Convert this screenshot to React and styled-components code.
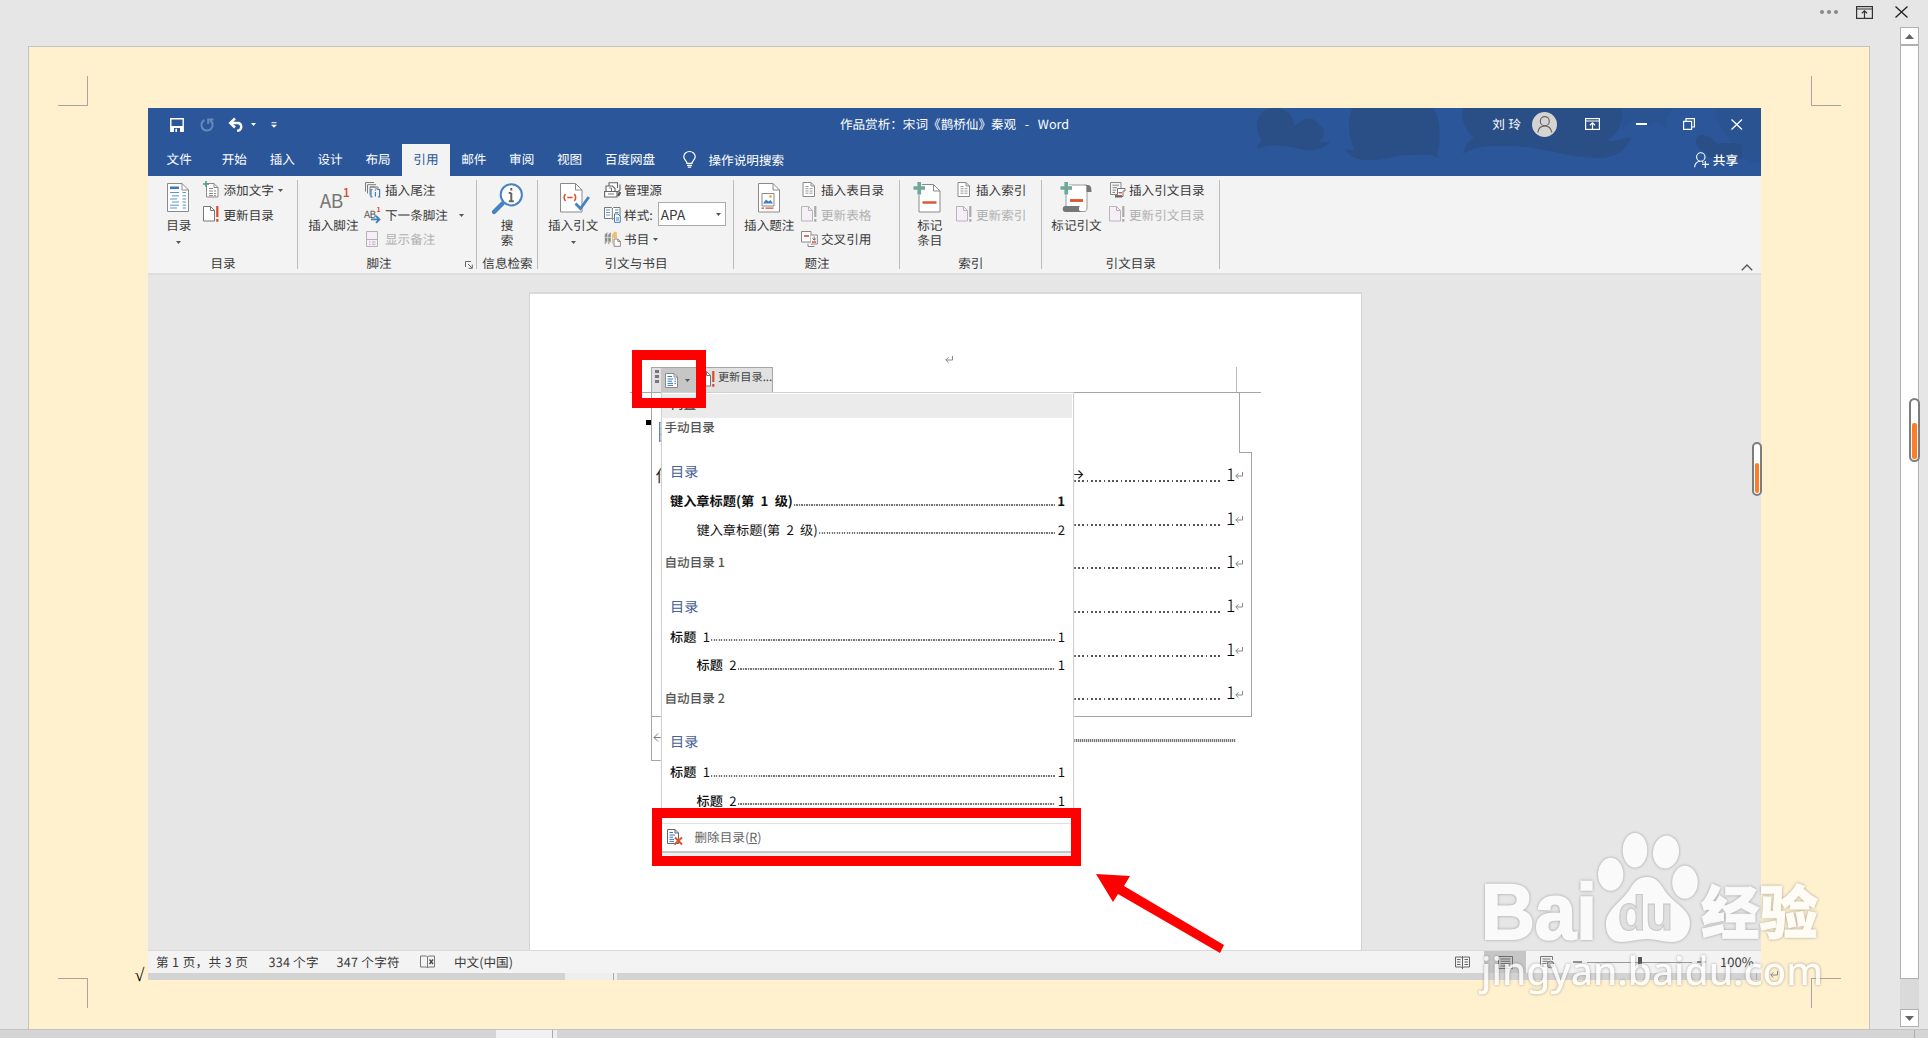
import React from 'react';
import styled, { createGlobalStyle } from 'styled-components';

const GlobalStyle = createGlobalStyle`
    * { box-sizing: border-box; }
    body {
        margin: 0;
        background: #e6e6e6;
        overflow: hidden;
        font-family: "Noto Sans CJK SC", sans-serif;
        font-size: 12.6px;
        color: #3a3a3a;
        text-rendering: geometricPrecision;
    }
    svg { display: block; flex-shrink: 0; overflow: visible; }
`;

/* ---------- icons ---------- */

const Svg = ({ w, h, children, ...rest }) => (
    <svg width={w} height={h} viewBox={`0 0 ${w} ${h}`} fill="none" {...rest}>{children}</svg>
);

const RibbonToggle = ({ w = 15, h = 12, color = '#fff' }) => (
    <Svg w={w} h={h} stroke={color} strokeWidth="1.2">
        <rect x=".6" y=".6" width={w - 1.2} height={h - 1.2} />
        <path d={`M0 3H${w}M${w / 2} ${h - 1}V5M${w / 2 - 2.6} 7.2L${w / 2} 4.8L${w / 2 + 2.6} 7.2`} />
    </Svg>
);

const Cross = ({ w = 11.5, h = 11, color = '#fff' }) => (
    <Svg w={w} h={h} stroke={color} strokeWidth="1.3"><path d={`M.5 .5L${w - .5} ${h - .5}M${w - .5} .5L.5 ${h - .5}`} /></Svg>
);

const Caret = ({ color = '#555' }) => <Svg w={5} h={3}><path d="M0 0H5L2.5 3Z" fill={color} /></Svg>;

const SaveIcon = () => (
    <Svg w={14} h={14}>
        <path d="M.8 .8H13.2V13.2H.8Z" stroke="#fff" strokeWidth="1.4" />
        <path d="M1 8H13V13H1Z" fill="#fff" />
        <path d="M4 10H10V14H4Z" fill="#2b579a" /><path d="M5.4 10.8H7V14H5.4Z" fill="#fff" />
    </Svg>
);
const RedoIcon = () => (
    <Svg w={14} h={14} stroke="#6788bb" strokeWidth="2"><path d="M4.5 2A5.6 5.6 0 1 0 10.2 2.4M8.2 6V1.5H13.5" /></Svg>
);
const UndoIcon = () => (
    <Svg w={16} h={14}>
        <path d="M3 5H9.5A4 4 0 0 1 9.5 12.6H8" stroke="#fff" strokeWidth="2.4" />
        <path d="M6 .5L1.2 5L6 9.5" stroke="#fff" strokeWidth="2.4" />
    </Svg>
);
const CustomizeIcon = () => <Svg w={6} h={6}><path d="M.5 .7H5.5" stroke="#fff" /><path d="M0 2.8H6L3 5.8Z" fill="#fff" /></Svg>;
const RestoreIcon = () => (
    <Svg w={12} h={12} stroke="#fff" strokeWidth="1.2"><path d="M.6 3.4H8.6V11.4H.6ZM3 3.2V.6H11.4V9H9" /></Svg>
);
const PersonIcon = () => (
    <Svg w={25} h={25}>
        <circle cx="12.5" cy="12.5" r="12.5" fill="#d6d4d3" />
        <circle cx="12.8" cy="9.2" r="4.5" stroke="#666" strokeWidth="1.2" />
        <path d="M5.8 20.5C6.5 16 9 13.8 12.8 13.8S19 16 19.8 20.5" stroke="#666" strokeWidth="1.2" />
    </Svg>
);
const ShareIcon = () => (
    <Svg w={16} h={16} stroke="#fff" strokeWidth="1.1">
        <circle cx="6.8" cy="5" r="4.2" /><path d="M.6 15.2C.8 11.5 2.6 9.6 6 9.2M8 9.6L9.4 10.4M11.3 9V16M8 12.4H15" />
    </Svg>
);
const BulbIcon = () => (
    <Svg w={13} h={17} stroke="#fff" strokeWidth="1.2">
        <path d="M4 12.4C4 9.6 .8 9 .8 5.8A5.6 5.2 0 0 1 12.2 5.8C12.2 9 9 9.6 9 12.4ZM4 14.3H9M4.8 16.2H8.2" />
    </Svg>
);

const page = (w, h, f, fill = '#fff', stroke = '#8a8a8a') => (
    <>
        <path d={`M.5 .5H${w - f}L${w - .5} ${f}V${h - .5}H.5Z`} fill={fill} stroke={stroke} />
        <path d={`M${w - f} .5V${f}H${w - .5}`} stroke={stroke} />
    </>
);

const TocIcon = () => (
    <Svg w={22} h={29}>
        {page(22, 29, 7)}
        <path d="M3 4.8H12" stroke="#3b78b8" strokeWidth="2.6" />
        <path d="M3 9.5H12M5 12.8H12M3 16H10M5 19H12M3 22.2H12M3 25H10" stroke="#5c93cb" />
        <path d="M15.5 9.5H19M15.5 12.8H19M15.5 16H19M15.5 19H19M15.5 22.2H19M15.5 25H19" stroke="#5c93cb" />
    </Svg>
);
const AddTextIcon = () => (
    <Svg w={16} h={17}>
        <g transform="translate(3 2)">{page(12.5, 14.5, 4.5)}<path d="M3 5.5H7M3 8H10M3 10.5H10M3 12.6H10" stroke="#8a8a8a" strokeDasharray="4 1" /></g>
        <path d="M0 3H6M3 0V6" stroke="#4fa182" strokeWidth="1.6" />
    </Svg>
);
const UpdateIcon = ({ off }) => (
    <Svg w={16} h={16}>
        {page(12, 15.5, 4.5, off ? '#f6eff8' : '#fff', off ? '#b9b3bb' : '#777')}
        <path d="M14.3 0V11M14.3 13V15.8" stroke={off ? '#aaa' : '#dc4c2c'} strokeWidth="2.2" />
    </Svg>
);
const EndnoteIcon = () => (
    <Svg w={17} h={16}>
        <path d="M1.5 9.5V.5H10M3.5 11.5V2.7H12M6 13.5V5H10.5L14 8V5H6" stroke="#7d7d7d" />
        <path d="M8.5 7.5H7V14.8H8.5M14 7.5H15.6V14.8H14M11.4 10V14.5M11.4 7.6V8.8" stroke="#3f7fbf" strokeWidth="1.2" />
    </Svg>
);
const NextNoteIcon = () => (
    <Svg w={17} h={17}>
        <text x="0" y="11.5" fontSize="10" fill="#555" textLength="12" fontFamily="Noto Sans CJK SC">AB</text>
        <text x="12.5" y="6" fontSize="7" fill="#dc4c2c" fontWeight="700">1</text>
        <path d="M7 13.4H15M12 10L15.5 13.4L12 16.8" stroke="#3f7fbf" strokeWidth="1.8" />
    </Svg>
);
const ShowNotesIcon = () => (
    <Svg w={17} h={16}>
        <path d="M2.5 .5H13.5V15.5H2.5Z" fill="#f6eff8" stroke="#b5b0b8" /><path d="M2.5 8.5H13.5M5 11H6.5M8 11H11.5M5 13.3H6.5M8 13.3H11.5" stroke="#b5b0b8" />
    </Svg>
);
const SearchInfoIcon = () => (
    <Svg w={31} h={31}>
        <path d="M10.5 20.5L2 29" stroke="#4583c2" strokeWidth="4.4" strokeLinecap="round" />
        <circle cx="19.3" cy="11.8" r="10.6" fill="#fff" stroke="#4583c2" strokeWidth="2" />
        <path d="M19.3 10V18.5M16.8 10H19.3M16.8 18.3H21.8M19.3 5V7.6" stroke="#666" strokeWidth="2" />
    </Svg>
);
const CitationIcon = () => (
    <Svg w={30} h={30}>
        {page(22.5, 29.5, 7)}
        <path d="M5.5 11C3.5 13.5 3.5 15.5 5.5 18M14.3 11C16.3 13.5 16.3 15.5 14.3 18M7.3 14.5H12.6" stroke="#dc4c2c" strokeWidth="1.5" />
        <path d="M15.5 20.5L20.5 25.5L28.8 14" stroke="#4583c2" strokeWidth="2.8" />
    </Svg>
);
const SourcesIcon = () => (
    <Svg w={17} h={16}>
        <path d="M.6 9.5H13V15H.6ZM2 9V4H8.5L11 6.5V9M5 3.5V.8H13.5V6M13.5 10L16 8V2.5" stroke="#666" fill="#fff" strokeWidth="1.1" />
        <path d="M14 14L16.2 10" stroke="#555" strokeWidth="2.4" /><path d="M4 12H10M5 6H7.5V9" stroke="#777" />
    </Svg>
);
const StyleIcon = () => (
    <Svg w={17} h={17}>
        <path d="M.5 1.5H7.5L8.5 2.5L9.5 1.5H16V12.5H9.5L8.5 13.5L7.5 12.5H.5ZM8.3 2V13" stroke="#777" fill="#fff" />
        <path d="M2 4H6M2 6.5H6M2 9H6M11 4H14.5M11 6.5H14.5" stroke="#5c93cb" />
        <path d="M10.5 8H14L16.3 10.3V16.3H10.5Z" fill="#fff" stroke="#3f7fbf" /><path d="M12 12H15M12 14H15" stroke="#3f7fbf" />
    </Svg>
);
const BibliographyIcon = () => (
    <Svg w={17} h={16}>
        <path d="M.8 3.8L3.4 1.2V10.8L.8 13.4ZM4.2 3.8L6.8 1.2V10.8L4.2 13.4Z" fill="#8c8c8c" />
        <path d="M.8 3.2L3 .8M4.2 3.2L6.4 .8M.8 6.4H7M.8 11H7" stroke="#d9d9d9" strokeWidth=".8" />
        <path d="M8 3.2L10.6 .4L13 1.4V7H9V13L8 12.4Z" fill="#ecc078" />
        <g transform="translate(9.5 7.5)">{page(7.3, 8.3, 3)}</g>
    </Svg>
);
const CaptionIcon = () => (
    <Svg w={22} h={30}>
        {page(22, 29.5, 7)}
        <path d="M4 10.5H16V23H4Z" fill="#fff" stroke="#888" /><path d="M5 20.5L8 16.5L10.5 18.5L12.5 17L15 20.5Z" fill="#3f7fbf" />
        <circle cx="12.5" cy="13.5" r="1.3" fill="#e9a23b" /><path d="M3.5 25.2H6M7.5 25.2H15.5" stroke="#dc4c2c" strokeWidth="1.2" />
    </Svg>
);
const ListIcon = () => (
    <Svg w={16} h={15}>
        <g transform="translate(1.5 0)">{page(12.5, 15, 4)}<path d="M3 4.5H7M3 6.7H10M3 9H10M3 11.2H10" stroke="#999" strokeDasharray="3 1" /></g>
    </Svg>
);
const CrossRefIcon = () => (
    <Svg w={17} h={16}>
        <path d="M.5 .5H10V11H.5Z" fill="#fff" stroke="#888" /><path d="M3 5H8" stroke="#dc4c2c" strokeWidth="1.6" />
        <path d="M10 4H16.3V13H10M7 12.5V15.5H13.5" stroke="#888" fill="#fff" /><path d="M11 11H15" stroke="#dc4c2c" strokeWidth="1.5" />
        <path d="M13.2 5.5V9M11.5 7.5L13.2 9.2L15 7.5" stroke="#666" />
    </Svg>
);
const MarkEntryIcon = () => (
    <Svg w={28} h={31}>
        <g transform="translate(5.5 2)">{page(22, 28.5, 7)}<path d="M4 18.5H18" stroke="#d9552f" strokeWidth="2.4" /></g>
        <path d="M.5 6H12M6.2 0V12.5" stroke="#f3f3f3" strokeWidth="5.4" /><path d="M.5 6H12M6.2 0V12.5" stroke="#6fa898" strokeWidth="3.6" />
    </Svg>
);
const MarkCitationIcon = () => (
    <Svg w={32} h={31}>
        <path d="M6 3H27V26C27 28 26 29.5 24 29.5H6Z" fill="#fff" stroke="#999" />
        <path d="M25 3H28C31 3 31.5 6 31.5 10H26.5V4Z" fill="#777" />
        <path d="M4.5 24H20C18 26 19 30 22 30H5.5C2 30 2 25 4.5 24Z" fill="#777" />
        <path d="M10 18.5H23" stroke="#d9552f" strokeWidth="2.8" />
        <path d="M.5 6H12M6.2 0V12.5" stroke="#f3f3f3" strokeWidth="5.4" /><path d="M.5 6H12M6.2 0V12.5" stroke="#6fa898" strokeWidth="3.6" />
    </Svg>
);
const CitationTableIcon = () => (
    <Svg w={17} h={16}>
        <path d="M1.5 .5H12V6M1.5 .5V12.5H6M3.5 3.2H10M3.5 5.7H8M3.5 8.2H7M3.5 10.5H6" stroke="#8a8a8a" />
        <path d="M8.5 6.5H16V9H14V14.5H6.5V12.5H8.5Z" fill="#fff" stroke="#777" /><path d="M6 14.3H13" stroke="#666" strokeWidth="2.4" />
        <path d="M9.5 10.7H13" stroke="#dc4c2c" strokeWidth="1.3" />
    </Svg>
);
const SmallTocIcon = () => (
    <Svg w={13} h={15}>{page(13, 15, 4)}<path d="M2.5 3.5H7M2.5 6H8M2.5 8.2H7M2.5 10.4H8M2.5 12.4H8M9.5 6H11M9.5 8.2H11M9.5 10.4H11" stroke="#3b78b8" /></Svg>
);
const RemoveTocIcon = () => (
    <Svg w={16} h={16}>
        {page(12, 15, 4, '#fff', '#666')}<path d="M2.5 3.5H6M2.5 6H8M2.5 8.2H6M2.5 10.4H7M2.5 12.4H7" stroke="#3b78b8" />
        <path d="M8 8.5L15 15.5M15 8.5L7.5 15.5" stroke="#d9552f" strokeWidth="2" />
    </Svg>
);
const LauncherIcon = () => <Svg w={8} h={8} stroke="#666"><path d="M.5 6V.5H6M3 3L7 7M7.3 3.6V7.3H3.6" /></Svg>;
const ProofIcon = () => (
    <Svg w={15} h={13} stroke="#777"><path d="M.5 1H6.5L7.5 2L8.5 1H14.5V12H8.5L7.5 13L6.5 12H.5ZM7.5 2V13" /><path d="M9.5 4.5L13 9M13 4.5L9.5 9" stroke="#444" strokeWidth="1.3" /></Svg>
);
const ReadIcon = () => (
    <Svg w={15} h={13} stroke="#666"><path d="M.5 1H6.5L7.5 2L8.5 1H14.5V11H8.5L7.5 12L6.5 11H.5ZM7.5 0V13M2 3.5H5.5M2 6H5.5M2 8.5H5.5M9.5 3.5H13M9.5 6H13M9.5 8.5H13" /></Svg>
);
const PrintIcon = () => (
    <Svg w={15} h={13} stroke="#6b6b6b"><path d="M.5 .5H14.5V12.5H.5ZM2.5 3H12.5M2.5 5.3H12.5M2.5 7.6H12.5M2.5 10H12.5" /></Svg>
);
const WebIcon = () => (
    <Svg w={15} h={13} stroke="#777"><path d="M.5 11V.5H12.5V4M.5 10.5H6M2.5 3H10.5M2.5 5.3H8M2.5 7.6H6.5" /><circle cx="10.5" cy="8.5" r="3.4" fill="#bbb" /></Svg>
);
const ReturnMark = ({ color = '#888' }) => <Svg w={8} h={7} stroke={color}><path d="M7.5 0V4H.8M3.5 1.3L.8 4L3.5 6.7" /></Svg>;

/* ---------- outer editor ---------- */

const Root = styled.div`
    width: 1928px;
    height: 1038px;
    display: flex;
    flex-direction: column;
    overflow: hidden;
`;
const TopBar = styled.div`
    height: 27px;
    padding: 6px 20px 0 0;
    display: flex;
    justify-content: flex-end;
`;
const More = styled.div`
    display: flex;
    gap: 3px;
    margin: 4px 18px 0 0;
    i { width: 4px; height: 4px; border-radius: 50%; background: #888; }
`;
const TopGap = styled.div`width: 22px;`;
const Workspace = styled.div`
    height: 1002px;
    display: flex;
`;
const Sheet = styled.div`
    position: relative;
    width: 1842px;
    margin: 19px 30px 0 28px;
    padding: 61px 0 0 119px;
    border: 1px solid #c3c3c3;
    border-bottom: 0;
    background: #fff0ce;
`;
const CropMark = styled.div`
    position: absolute;
    width: 30px;
    height: 30px;
    border: 0 solid #aaa5a0;
    ${p => p.$v}: ${p => (p.$v === 'top' ? 29 : 21)}px;
    ${p => p.$h}: ${p => (p.$h === 'left' ? 29 : 28)}px;
    border-${p => p.$v === 'top' ? 'bottom' : 'top'}-width: 1px;
    border-${p => p.$h === 'left' ? 'right' : 'left'}-width: 1px;
`;
const RootSign = styled.span`
    position: absolute;
    left: 105.5px;
    top: 918px;
    font: 18px/20px "Liberation Serif", serif;
    color: #000;
`;
const EndMark = styled.span`
    position: absolute;
    left: 1741px;
    top: 924px;
`;
const ScrollTrack = styled.div`
    width: 19px;
    height: 1000px;
    display: flex;
    flex-direction: column;
    background: #dadada;
`;
const ScrollButton = styled.div`
    height: 18px;
    display: grid;
    place-items: center;
    background: #fff;
    border: 1px solid #b0b0b0;
`;
const ScrollThumb = styled.div`
    height: 934px;
    background: #fff;
    border: 1px solid #b0b0b0;
    margin-bottom: 30px;
`;
const BottomBar = styled.div`
    height: 9px;
    display: flex;
    background: #d5d5d5;
    border-top: 1px solid #c3c3c3;
`;
const Segment = styled.div`
    width: ${p => p.$w}px;
    background: ${p => p.$bg || 'transparent'};
    border-right: ${p => (p.$line ? '1px solid #aaa' : 0)};
`;
const Capsule = styled.div`
    position: absolute;
    left: ${p => p.$x}px;
    top: ${p => p.$y}px;
    width: ${p => p.$w}px;
    height: ${p => p.$h}px;
    border: 2px solid #7d7d7d;
    border-radius: 6px;
    background: #fff;
    padding: ${p => p.$h * 0.36}px 1px 1px;
    &::after {
        content: '';
        display: block;
        height: 100%;
        border-radius: 2px;
        background: #ff7d27;
    }
`;

/* ---------- inner Word window ---------- */

const Window = styled.div`
    position: relative;
    width: 1613px;
    height: 872px;
    display: flex;
    flex-direction: column;
    background: #f3f3f3;
`;
const Header = styled.div`
    position: relative;
    height: 68px;
    background: #2b579a;
    color: #fff;
`;
const Clouds = styled.div`
    position: absolute;
    right: 0;
    top: 0;
`;
const TitleBar = styled.div`
    position: relative;
    height: 36px;
    display: grid;
    grid-template-columns: 1fr auto 1fr;
    align-items: center;
`;
const QuickAccess = styled.div`
    display: flex;
    align-items: center;
    padding: 0 0 3px 22px;
`;
const QuickItem = styled.div`margin-right: ${p => p.$gap}px;`;
const Title = styled.div`
    padding-bottom: 5px;
    word-spacing: 1.5px;
    white-space: pre;
`;
const WindowButtons = styled.div`
    display: flex;
    justify-content: flex-end;
    align-items: center;
    gap: 36px;
    padding: 0 18.5px 4px 0;
`;
const User = styled.div`
    display: flex;
    align-items: center;
    gap: 10.5px;
    margin-right: -7.5px;
    line-height: 22px;
    span { padding-bottom: 1px; word-spacing: .8px; }
`;
const Minus = styled.div`
    width: 11px;
    height: 1.5px;
    background: #fff;
`;
const Tabs = styled.div`
    position: relative;
    height: 32px;
    display: flex;
    line-height: 30px;
    text-align: center;
`;
const Tab = styled.div`
    width: ${p => p.$w || 47.9}px;
    ${p => p.$active && 'background: #f3f3f3; color: #2b579a;'}
`;
const Tell = styled.div`
    display: flex;
    align-items: center;
    gap: 12.5px;
    margin-left: 16.5px;
    padding-bottom: 1px;
`;
const Share = styled.div`
    display: flex;
    align-items: center;
    gap: 3px;
    margin: 0 23px 0 auto;
    font-weight: 500;
`;
const Ribbon = styled.div`
    height: 99px;
    display: flex;
    border-bottom: 2px solid #dedede;
`;
const Group = styled.div`
    position: relative;
    width: ${p => p.$w}px;
    height: 97px;
    &::after {
        content: '';
        position: absolute;
        right: 0;
        top: 4px;
        height: 89px;
        border-right: 1px solid #bdbdbd;
    }
`;
const GroupBody = styled.div`
    display: flex;
    height: 78px;
    padding-left: ${p => p.$pad || 0}px;
`;
const GroupLabel = styled.div`
    line-height: 18px;
    padding-right: ${p => (p.$shift ? 17 : 0)}px;
    text-align: center;
`;
const Launcher = styled.div`
    position: absolute;
    right: 4px;
    bottom: 4px;
`;
const BigButton = styled.div`
    width: ${p => p.$w}px;
    display: flex;
    flex-direction: column;
    align-items: center;
    text-align: center;
    line-height: 15.8px;
    white-space: nowrap;
    svg { margin-top: 9px; }
`;
const BigIcon = styled.div`
    height: 40.5px;
    flex-shrink: 0;
    margin-left: ${p => p.$dx || 0}px;
    padding-top: ${p => p.$top || 7}px;
    && svg { margin: 0; }
`;
const SmallColumn = styled.div`padding-top: 1.7px;`;
const SmallButton = styled.div`
    height: 24.4px;
    display: flex;
    align-items: center;
    white-space: nowrap;
    color: ${p => (p.$off ? '#b1b1b1' : '#3a3a3a')};
    & > svg { margin: 2px 0 0 ${p => p.$caretGap}px; }
`;
const SmallIcon = styled.div`width: 20.5px;`;
const Combo = styled.div`
    width: 68px;
    height: 24px;
    margin-left: 5px;
    padding: 0 4px 0 2px;
    display: flex;
    align-items: center;
    justify-content: space-between;
    font-size: 13.6px;
    background: #fff;
    border: 1px solid #ababab;
`;
const NoteGlyph = styled.div`
    position: relative;
    left: -2px;
    font-size: 19px;
    line-height: 28px;
    letter-spacing: -.4px;
    color: #777;
    padding-top: 4px;
    sup {
        position: absolute;
        left: 23px;
        top: 1px;
        font-size: 12.5px;
        line-height: 15px;
        font-weight: 500;
        color: #dc4c2c;
    }
`;
const Collapse = styled.div`
    margin: 88px 8px 0 auto;
`;

/* ---------- document ---------- */

const Canvas = styled.div`
    height: 675px;
    padding: 17px 0 0 381px;
    background: #e6e6e6;
    overflow: hidden;
`;
const Paper = styled.div`
    position: relative;
    width: 833px;
    height: 670px;
    background: #fff;
    border: 1px solid #d3d3d3;
    border-top: 2px solid #dadada;
`;
const PaperHead = styled.div`
    width: 631px;
    height: 99px;
    margin-left: 100px;
    padding: 62px 0 0 315px;
    border-bottom: 1px solid #a5a5a5;
`;
const MarginTick = styled.div`
    position: absolute;
    left: 706px;
    top: 73px;
    height: 25px;
    border-left: 1px solid #bbb;
`;
const TocTop = styled.div`
    width: 589px;
    height: 59px;
    margin-left: 121px;
    border: solid #a5a5a5;
    border-width: 0 1px;
`;
const TocBody = styled.div`
    width: 601px;
    height: 265px;
    margin-left: 121px;
    border: 1px solid #a5a5a5;
    border-top: 0;
`;
const TocRow = styled.div`
    height: 43.7px;
    padding-left: 422px;
    display: flex;
    align-items: center;
    & > svg { margin-top: 2px; }
`;
const TocStep = styled.div`
    width: 12px;
    height: 1px;
    margin-left: auto;
    background: #a5a5a5;
`;
const Dots = styled.div`
    width: 147px;
    height: 2px;
    margin: 12px 5px 0 0;
    background: repeating-linear-gradient(90deg, #555 0 1.7px, transparent 1.7px 4.25px);
`;
const TocNumber = styled.span`
    width: 8px;
    font-size: 17.5px;
    font-weight: 300;
    line-height: 24px;
    margin-right: 1px;
    color: #000;
`;
const TocTail = styled.div`
    width: 10px;
    height: 44px;
    margin-left: 121px;
    border: solid #a5a5a5;
    border-width: 0 0 1px 1px;
    padding: 16px 0 0 1px;
`;
const SectionBreak = styled.div`
    position: absolute;
    left: 544px;
    top: 445px;
    width: 162px;
    height: 3px;
    background: repeating-linear-gradient(90deg, #777 0 1px, #d8d8d8 1px 2px);
`;
const Bullet = styled.div`
    position: absolute;
    left: 116px;
    top: 126px;
    width: 5px;
    height: 5px;
    background: #000;
`;
const HiddenTitle = styled.div`
    position: absolute;
    left: 129px;
    top: 128px;
    width: 3px;
    height: 20px;
    background: repeating-linear-gradient(180deg, #5a7bb8 0 1px, #a9bbdc 1px 6px);
    border-left: 1px solid #5a7bb8;
`;
const HiddenEntry = styled.div`
    position: absolute;
    left: 125.5px;
    top: 171px;
    font-size: 17px;
    line-height: 20px;
    color: #222;
`;
const TabMark = styled.div`
    position: absolute;
    left: 543px;
    top: 176px;
`;
const TocToolbar = styled.div`
    position: absolute;
    left: 121px;
    top: 73px;
    width: 122px;
    height: 26px;
    display: flex;
    background: #e1e1e1;
    border: 1px solid #a6a6a6;
    font-size: 11.2px;
    line-height: 18px;
    color: #444;
`;
const Grip = styled.div`
    width: 9px;
    padding: 2px 0 0 3px;
    i { display: block; width: 4px; height: 3px; background: #777; margin-bottom: 2px; }
`;
const TocMenuButton = styled.div`
    width: 37px;
    height: 24px;
    display: flex;
    align-items: center;
    gap: 7px;
    padding-left: 4px;
    background: #c6c6c6;
`;
const UpdateButton = styled.div`
    display: flex;
    align-items: flex-start;
    gap: 2.5px;
    padding-left: 2.5px;
    white-space: nowrap;
    svg { margin-top: 3px; }
`;
const Menu = styled.div`
    position: absolute;
    left: 131px;
    top: 98px;
    width: 413px;
    height: 461px;
    display: flex;
    flex-direction: column;
    background: #fff;
    border: 1px solid #d0d0d0;
    border-bottom: 2px solid #c6c6c6;
    box-shadow: 0 3px 2px #eee;
`;
const MenuHead = styled.div`
    height: 24px;
    margin: 1px 1px -1px 0;
    padding: 1px 0 0 9px;
    line-height: 18px;
    font-weight: 500;
    background: #ebebeb;
`;
const Section = styled.div`
    height: 135.3px;
    padding: 0 8px 0 8px;
`;
const SectionLabel = styled.div`
    margin-left: -5.5px;
    line-height: 19px;
    font-weight: 500;
    color: #555;
`;
const SectionTitle = styled.div`
    margin: 25.5px 0 5.2px;
    font-size: 14.2px;
    line-height: 20px;
    color: #4a6193;
`;
const Entry = styled.div`
    height: 28.5px;
    display: flex;
    align-items: center;
    padding-left: ${p => (p.$sub ? 26.5 : 0)}px;
    font-size: 13.2px;
    font-weight: ${p => p.$weight};
    word-spacing: 3.4px;
    white-space: pre;
    color: #111;
    i {
        flex: 1;
        height: 2px;
        margin: 8px 2.5px 0 1px;
        background: repeating-linear-gradient(90deg, #777 0 1.2px, #e6e6e6 1.2px 2.5px);
    }
    b { font-weight: ${p => (p.$weight === 700 ? 700 : 400)}; }
`;
const MenuFoot = styled.div`
    height: 28px;
    margin-top: auto;
    border-top: 1px solid #e1e1e1;
    display: flex;
    align-items: center;
    gap: 12px;
    padding: 0 0 2px 4.5px;
    color: #666;
`;

/* ---------- status bar ---------- */

const StatusBar = styled.div`
    height: 23px;
    display: flex;
    align-items: center;
    border-top: 1px solid #dadada;
    padding-left: 8px;
    line-height: 20px;
    white-space: pre;
`;
const StatusItem = styled.div`
    width: ${p => p.$w}px;
    padding-bottom: 1px;
    letter-spacing: ${p => p.$ls || 0}px;
`;
const ViewTools = styled.div`
    margin-left: auto;
    display: flex;
    align-items: center;
    height: 22px;
`;
const ActiveView = styled.div`
    width: 42px;
    height: 22px;
    margin: 0 14px;
    display: grid;
    place-items: center;
    background: #c6c6c6;
`;
const Slider = styled.div`
    display: flex;
    align-items: center;
    margin: 0 14px 0 18px;
`;
const Percent = styled.div`
    width: 41px;
    padding-bottom: 1px;
    font-size: 13px;
`;
const BottomStrip = styled.div`
    height: 7px;
    display: flex;
    background: #d3d3d3;
`;

/* ---------- callouts ---------- */

const RedBox = styled.div`
    position: absolute;
    left: ${p => p.$x}px;
    top: ${p => p.$y}px;
    width: ${p => p.$w}px;
    height: 58px;
    border: 10px solid #fe0000;
`;
const Arrow = styled.div`
    position: absolute;
    left: 948px;
    top: 766px;
`;
const Watermark = styled.div`
    position: absolute;
    left: 1470px;
    top: 825px;
    filter: drop-shadow(0 0 1.5px rgba(110, 110, 110, .75));
    opacity: .8;
`;

const tabs = ['开始', '插入', '设计', '布局', '引用', '邮件', '审阅', '视图'];

const sections = [
    { label: '手动目录', weights: [700, 400], one: ['键入章标题(第 1 级)', '', 1], two: ['键入章标题(第 2 级)', '', 2] },
    { label: '自动目录 1', weights: [500, 500], one: ['标题', ' 1', 1], two: ['标题', ' 2', 1] },
    { label: '自动目录 2', weights: [500, 500], one: ['标题', ' 1', 1], two: ['标题', ' 2', 1] },
];

const Small = ({ icon, children, off, caret, gap }) => (
    <SmallButton $off={off} $caretGap={gap}>
        <SmallIcon>{icon}</SmallIcon>
        {children}
        {caret && <Caret />}
    </SmallButton>
);

const References = () => (
    <Ribbon>
        <Group $w={150}>
            <GroupBody $pad={6.5}>
                <BigButton $w={48.5}><BigIcon $dx={-1}><TocIcon /></BigIcon>目录<Caret /></BigButton>
                <SmallColumn>
                    <Small icon={<AddTextIcon />} caret gap={4}>添加文字</Small>
                    <Small icon={<UpdateIcon />}>更新目录</Small>
                </SmallColumn>
            </GroupBody>
            <GroupLabel>目录</GroupLabel>
        </Group>
        <Group $w={179}>
            <GroupBody $pad={4.2}>
                <BigButton $w={62.3}><BigIcon><NoteGlyph>AB<sup>1</sup></NoteGlyph></BigIcon>插入脚注</BigButton>
                <SmallColumn>
                    <Small icon={<EndnoteIcon />}>插入尾注</Small>
                    <Small icon={<NextNoteIcon />} caret gap={11}>下一条脚注</Small>
                    <Small icon={<ShowNotesIcon />} off>显示备注</Small>
                </SmallColumn>
            </GroupBody>
            <GroupLabel $shift>脚注</GroupLabel>
            <Launcher><LauncherIcon /></Launcher>
        </Group>
        <Group $w={61}>
            <GroupBody>
                <BigButton $w={60}><BigIcon><SearchInfoIcon /></BigIcon>搜<br />索</BigButton>
            </GroupBody>
            <GroupLabel>信息检索</GroupLabel>
        </Group>
        <Group $w={196}>
            <GroupBody $pad={4.6}>
                <BigButton $w={61}><BigIcon $dx={3}><CitationIcon /></BigIcon>插入引文<Caret /></BigButton>
                <SmallColumn>
                    <Small icon={<SourcesIcon />}>管理源</Small>
                    <Small icon={<StyleIcon />}>样式:<Combo>APA<Caret /></Combo></Small>
                    <Small icon={<BibliographyIcon />} caret gap={4}>书目</Small>
                </SmallColumn>
            </GroupBody>
            <GroupLabel>引文与书目</GroupLabel>
        </Group>
        <Group $w={166}>
            <GroupBody $pad={4}>
                <BigButton $w={62.5}><BigIcon><CaptionIcon /></BigIcon>插入题注</BigButton>
                <SmallColumn>
                    <Small icon={<ListIcon />}>插入表目录</Small>
                    <Small icon={<UpdateIcon off />} off>更新表格</Small>
                    <Small icon={<CrossRefIcon />}>交叉引用</Small>
                </SmallColumn>
            </GroupBody>
            <GroupLabel>题注</GroupLabel>
        </Group>
        <Group $w={141.5}>
            <GroupBody $pad={4}>
                <BigButton $w={51.5}><BigIcon $dx={-5} $top={6}><MarkEntryIcon /></BigIcon>标记<br />条目</BigButton>
                <SmallColumn>
                    <Small icon={<ListIcon />}>插入索引</Small>
                    <Small icon={<UpdateIcon off />} off>更新索引</Small>
                </SmallColumn>
            </GroupBody>
            <GroupLabel>索引</GroupLabel>
        </Group>
        <Group $w={178.5}>
            <GroupBody $pad={3}>
                <BigButton $w={64}><BigIcon $dx={-2} $top={6}><MarkCitationIcon /></BigIcon>标记引文</BigButton>
                <SmallColumn>
                    <Small icon={<CitationTableIcon />}>插入引文目录</Small>
                    <Small icon={<UpdateIcon off />} off>更新引文目录</Small>
                </SmallColumn>
            </GroupBody>
            <GroupLabel>引文目录</GroupLabel>
        </Group>
        <Collapse><Svg w={12} h={7} stroke="#555" strokeWidth="1.3"><path d="M.8 6.3L6 1L11.2 6.3" /></Svg></Collapse>
    </Ribbon>
);

const WindowHeader = () => (
    <Header>
        <Clouds>
            <Svg w={520} h={68}>
                <g fill="#2a4e86">
                    <path d="M24 2C32 -1 42 0 46 4C54 8 52 18 54 18C62 10 70 8 76 14C86 22 84 28 78 34C82 35 86 33 89 34C84 40 74 43 64 42C46 38 30 34 16 41C17 36 19 34 21 32C14 24 14 8 24 2Z" />
                    <path d="M112 0H192C200 10 200 36 196 46L199 51C192 46 184 46 170 47C158 46 146 52 130 52C116 53 108 48 104 41C110 43 112 42 113 40C107 28 106 8 112 0Z" />
                    <path d="M222 0H381C383 14 378 24 366 33C378 34 384 28 390 30C386 42 374 50 358 50C330 51 300 38 268 38C248 37 232 39 222 46C224 38 228 32 233 30C222 20 220 8 222 0Z" />
                    <path d="M458 27C470 26 474 34 476 36C486 35 498 34 501 38V50C486 54 468 54 464 44C456 42 452 32 458 27Z" />
                </g>
                <path d="M381 0H432C426 8 424 14 426 20C420 14 414 12 408 18C400 10 388 12 382 22Z" fill="#2a4e86" opacity=".4" />
                <path d="M474 0H520V56C510 54 504 52 500 48C492 30 476 26 474 0Z" fill="#2a4e86" opacity=".4" />
            </Svg>
        </Clouds>
        <TitleBar>
            <QuickAccess>
                <QuickItem $gap={16}><SaveIcon /></QuickItem>
                <QuickItem $gap={15}><RedoIcon /></QuickItem>
                <QuickItem $gap={5.5}><UndoIcon /></QuickItem>
                <QuickItem $gap={15.5}><Caret color="#fff" /></QuickItem>
                <QuickItem $gap={0}><CustomizeIcon /></QuickItem>
            </QuickAccess>
            <Title>作品赏析：宋词《鹊桥仙》秦观  -  Word</Title>
            <WindowButtons>
                <User><span>刘 玲</span><PersonIcon /></User>
                <RibbonToggle />
                <Minus />
                <RestoreIcon />
                <Cross />
            </WindowButtons>
        </TitleBar>
        <Tabs>
            <Tab $w={62.4}>文件</Tab>
            {tabs.map(t => <Tab key={t} $active={t === '引用'}>{t}</Tab>)}
            <Tab $w={73}>百度网盘</Tab>
            <Tell><BulbIcon />操作说明搜索</Tell>
            <Share><ShareIcon />共享</Share>
        </Tabs>
    </Header>
);

const TocEntry = ({ data, weight, sub }) => (
    <Entry $weight={weight} $sub={sub}>
        {data[0]}<b>{data[1]}</b><i /><b>{data[2]}</b>
    </Entry>
);

const TocDropdown = () => (
    <Menu>
        <MenuHead>内置</MenuHead>
        {sections.map(s => (
            <Section key={s.label}>
                <SectionLabel>{s.label}</SectionLabel>
                <SectionTitle>目录</SectionTitle>
                <TocEntry data={s.one} weight={s.weights[0]} />
                <TocEntry data={s.two} weight={s.weights[1]} sub />
            </Section>
        ))}
        <MenuFoot><RemoveTocIcon /><span>删除目录(<u>R</u>)</span></MenuFoot>
    </Menu>
);

const Document = () => (
    <Canvas>
        <Paper>
            <PaperHead><ReturnMark /></PaperHead>
            <MarginTick />
            <TocTop />
            <TocBody>
                <TocStep />
                {[1, 2, 3, 4, 5, 6].map(n => (
                    <TocRow key={n}><Dots /><TocNumber>1</TocNumber><ReturnMark color="#888" /></TocRow>
                ))}
            </TocBody>
            <TocTail><Svg w={9} h={9} stroke="#777"><path d="M9 4.5H1M5 .5L1 4.5L5 8.5" /></Svg></TocTail>
            <SectionBreak />
            <Bullet />
            <HiddenTitle />
            <HiddenEntry>作</HiddenEntry>
            <TabMark><Svg w={10} h={9} stroke="#222" strokeWidth="1.2"><path d="M0 4.5H9.5M5.5 .5L9.5 4.5L5.5 8.5" /></Svg></TabMark>
            <TocToolbar>
                <Grip><i /><i /><i /></Grip>
                <TocMenuButton><SmallTocIcon /><Caret /></TocMenuButton>
                <UpdateButton><UpdateIcon />更新目录...</UpdateButton>
            </TocToolbar>
            <TocDropdown />
        </Paper>
    </Canvas>
);

const Status = () => (
    <StatusBar>
        <StatusItem $w={112.5} $ls={0.35}>第 1 页，共 3 页</StatusItem>
        <StatusItem $w={68} $ls={0.2}>334 个字</StatusItem>
        <StatusItem $w={83.5} $ls={0.25}>347 个字符</StatusItem>
        <StatusItem $w={34}><ProofIcon /></StatusItem>
        <StatusItem $w={60}>中文(中国)</StatusItem>
        <ViewTools>
            <ReadIcon />
            <ActiveView><PrintIcon /></ActiveView>
            <WebIcon />
            <Slider>
                <Svg w={133} h={10} stroke="#666">
                    <path d="M0 5H9" strokeWidth="1.4" /><path d="M14 5.5H119" stroke="#999" />
                    <path d="M67 0V10" stroke="#555" strokeWidth="4" /><path d="M124 5H133M128.5 .5V9.5" strokeWidth="1.3" />
                </Svg>
            </Slider>
            <Percent>100%</Percent>
        </ViewTools>
    </StatusBar>
);

const BaiduMark = () => (
    <Watermark>
        <Svg w={360} h={180}>
            <g fill="#fff" fontFamily="Liberation Sans" fontWeight="700">
                <text x="11" y="113.5" fontSize="79" textLength="116" lengthAdjust="spacingAndGlyphs" stroke="#fff" strokeWidth="2">Bai</text>
                <ellipse cx="140.7" cy="49.3" rx="12.7" ry="16.5" />
                <ellipse cx="165" cy="25.3" rx="12.3" ry="17.3" />
                <ellipse cx="196" cy="27" rx="13" ry="16.5" transform="rotate(8 196 27)" />
                <ellipse cx="215" cy="57.3" rx="12.8" ry="16.5" />
                <path d="M177 52C186 52 190 58 195 66C203 78 220 84 220 98C220 110 212 117 202 117C192 117 186 114 177 114C168 114 160 117 151 117C140 117 135 108 136 96C138 84 152 76 160 64C164 57 168 52 177 52Z" />
                <text x="148" y="105" fontSize="49" textLength="55" lengthAdjust="spacingAndGlyphs" fill="#dedede" stroke="#c4c4c4" strokeWidth="1.2">du</text>
                <text x="231" y="109" fontSize="58" textLength="117" lengthAdjust="spacingAndGlyphs" fontFamily="Noto Sans CJK SC" fontWeight="900" stroke="#fff" strokeWidth="1">经验</text>
                <text x="11" y="160" fontSize="39" textLength="342" lengthAdjust="spacingAndGlyphs" fontFamily="Noto Sans" fontWeight="500">jingyan.baidu.com</text>
            </g>
        </Svg>
    </Watermark>
);

export default function App() {
    return (
        <Root>
            <GlobalStyle />
            <TopBar>
                <More><i /><i /><i /></More>
                <RibbonToggle w={17} h={13} color="#333" />
                <TopGap />
                <Cross w={13} h={12} color="#222" />
            </TopBar>
            <Workspace>
                <Sheet>
                    <CropMark $v="top" $h="left" />
                    <CropMark $v="top" $h="right" />
                    <CropMark $v="bottom" $h="left" />
                    <CropMark $v="bottom" $h="right" />
                    <RootSign>√</RootSign>
                    <EndMark><ReturnMark /></EndMark>
                    <Window>
                        <WindowHeader />
                        <References />
                        <Document />
                        <Status />
                        <BottomStrip>
                            <Segment $w={417} />
                            <Segment $w={49} $bg="#eee" $line />
                            <Segment $w={3} $bg="#eee" />
                            <Segment $w={1140} $line />
                        </BottomStrip>
                        <Capsule $x={1603.5} $y={334} $w={10} $h={54} />
                        <RedBox $x={484} $y={242} $w={74} />
                        <RedBox $x={504} $y={700} $w={429} />
                        <Arrow>
                            <Svg w={132} h={82}><path d="M0 0L34 2L28 12L128 71L124 79L22 20L17 28Z" fill="#fe0000" /></Svg>
                        </Arrow>
                    </Window>
                </Sheet>
                <ScrollTrack>
                    <ScrollButton><Svg w={9} h={5}><path d="M0 5L4.5 0L9 5Z" fill="#666" /></Svg></ScrollButton>
                    <ScrollThumb />
                    <ScrollButton><Svg w={9} h={5}><path d="M0 0L4.5 5L9 0Z" fill="#666" /></Svg></ScrollButton>
                </ScrollTrack>
            </Workspace>
            <BottomBar>
                <Segment $w={496} />
                <Segment $w={57} $bg="#f1f1f1" $line />
                <Segment $w={4} $bg="#eee" />
                <Segment $w={1358} $line />
            </BottomBar>
            <Capsule $x={1909} $y={398} $w={10.5} $h={64} />
            <BaiduMark />
        </Root>
    );
}
